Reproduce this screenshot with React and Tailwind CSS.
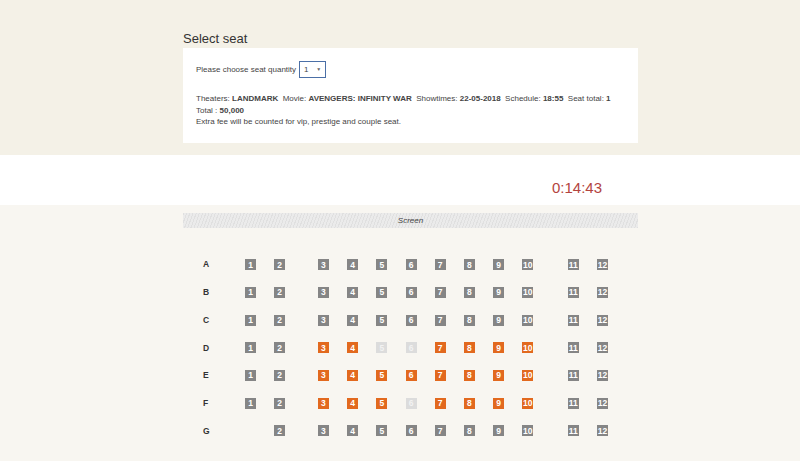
import React from "react";

const rows = [
  { label: "A", seats: {} },
  { label: "B", seats: {} },
  { label: "C", seats: {} },
  { label: "D", seats: { 3: "o", 4: "o", 5: "x", 6: "x", 7: "o", 8: "o", 9: "o", 10: "o" } },
  { label: "E", seats: { 3: "o", 4: "o", 5: "o", 6: "o", 7: "o", 8: "o", 9: "o", 10: "o" } },
  { label: "F", seats: { 3: "o", 4: "o", 5: "o", 6: "x", 7: "o", 8: "o", 9: "o", 10: "o" } },
  { label: "G", seats: { 1: "none" } },
];

const Seat = ({ n, state }) => {
  if (state === "none") return <div className="w-[29.2px]" />;
  const color =
    state === "o" ? "bg-[#e2691e] text-white" : state === "x" ? "bg-[#dcdcdc] text-[#f2f2f2]" : "bg-[#858585] text-white";
  return (
    <div className="w-[29.2px] flex">
      <div className={`w-[11px] h-[11px] flex items-center justify-center text-[8.5px] font-bold leading-none overflow-hidden ${color}`}>
        {n}
      </div>
    </div>
  );
};

const SeatRow = ({ row }) => {
  const s = (n) => <Seat key={n} n={n} state={row.seats[n]} />;
  return (
    <div className="flex items-center h-[27.7px]">
      <div className="w-[62px] pl-[20px] text-[8.5px] font-bold text-[#333]">{row.label}</div>
      <div className="flex">{[1, 2].map(s)}</div>
      <div className="flex ml-[14.6px]">{[3, 4, 5, 6, 7, 8, 9, 10].map(s)}</div>
      <div className="flex ml-[16.4px]">{[11, 12].map(s)}</div>
    </div>
  );
};

export default function App() {
  return (
    <div className="w-[800px] h-[461px] overflow-hidden bg-[#f8f6f1] text-[#333]" style={{ fontFamily: '"Liberation Sans", Arial, sans-serif' }}>
      <div className="bg-[#f4f1e7] h-[155px] pt-[30px]">
        <div className="w-[455px] ml-[183px]">
          <p className="text-[13px] leading-[18px] text-[#333]">Select seat</p>
          <div className="bg-white h-[95px] px-[13px] pt-[13px] text-[8px] text-[#444]">
            <div className="flex items-center">
              <span>Please choose seat quantity</span>
              <div className="ml-[3px] w-[27px] h-[17px] border border-[#4b6fa6] flex items-center justify-between px-[4px] text-[8px]">
                <span>1</span>
                <span className="text-[5px] text-[#666]">▼</span>
              </div>
            </div>
            <div className="mt-[15px] leading-[11.5px]">
              <p className="whitespace-nowrap">
                Theaters: <b>LANDMARK</b>&nbsp; Movie: <b>AVENGERS: INFINITY WAR</b>&nbsp; Showtimes: <b>22-05-2018</b>&nbsp; Schedule: <b>18:55</b>&nbsp; Seat total: <b>1</b>
              </p>
              <p>
                Total : <b>50,000</b>
              </p>
              <p>Extra fee will be counted for vip, prestige and couple seat.</p>
            </div>
          </div>
        </div>
      </div>
      <div className="bg-white h-[50px] flex items-center justify-end pr-[198px] pt-[16px]">
        <span className="text-[15px] text-[#b3443e]">0:14:43</span>
      </div>
      <div className="pt-[8px]">
        <div className="ml-[183px] w-[455px] h-[15px] flex items-center justify-center bg-[repeating-linear-gradient(110deg,#e0e0e0_0px,#e0e0e0_1px,#ebebeb_1px,#ebebeb_3px)]">
          <span className="text-[8px] italic text-[#444]">Screen</span>
        </div>
        <div className="ml-[183px] mt-[23px]">
          {rows.map((r) => (
            <SeatRow key={r.label} row={r} />
          ))}
        </div>
      </div>
    </div>
  );
}
